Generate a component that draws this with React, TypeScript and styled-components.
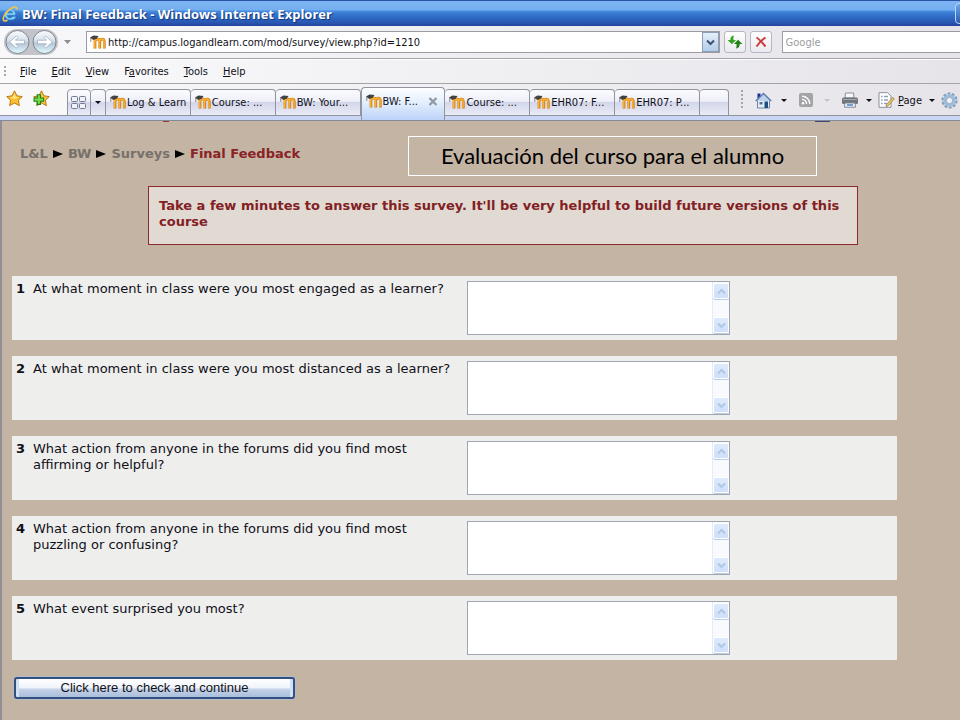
import React from "react";
import styled, { createGlobalStyle } from "styled-components";

const GlobalStyle = createGlobalStyle`
  * { box-sizing: border-box; }
  html, body, #root { height: 100%; }
  body { margin: 0; background: #c3b4a4; overflow: hidden; }
  button, input, textarea { font: inherit; color: inherit; margin: 0; padding: 0; border: 0; border-radius: 0; background: none; }
  svg { display: block; flex: none; }
`;

const ui = `"DejaVu Sans Condensed", "DejaVu Sans", sans-serif`;
const body = `"DejaVu Sans", Verdana, sans-serif`;

const Shell = styled.div`
  display: flex;
  flex-direction: column;
  min-height: 100%;
  font-family: ${ui};
  font-size: 11px;
  color: #101018;
`;

const TitleBar = styled.header`
  display: flex;
  align-items: center;
  gap: 4px;
  height: 26px;
  padding-left: 2px;
  overflow: hidden;
  border-top: 1px solid #2a52a4;
  background: linear-gradient(#7fb6f3 0, #72aef0 36%, #4a8fe2 40%, #3a7bd2 48%, #2f6dc6 64%, #2955b0 88%, #23459a 100%);
`;

const WindowTitle = styled.h1`
  flex: 1;
  margin: 0;
  font: bold 13px/18px "Open Sans", sans-serif;
  color: #fff;
  text-shadow: 1px 1px 1px #16357c;
  white-space: nowrap;
`;

const WindowButton = styled.button`
  flex: none;
  width: 22px;
  height: 21px;
  margin-right: -17px;
  border: 1px solid #b9d5f6;
  border-radius: 4px;
  background: linear-gradient(#6ea6ea, #2a5bb4);
`;

const AddressRow = styled.div`
  display: flex;
  align-items: center;
  height: 33px;
  padding-left: 4px;
  border-bottom: 1px solid #a5a5a9;
  background: linear-gradient(90deg, #f8f7f9, #e6e4e9);
`;

const NavButtons = styled.div`
  display: flex;
  height: 26px;
  border-radius: 13px;
  background: #c2c4c9;
`;

const NavButton = styled.button`
  width: 27px;
  height: 26px;
`;

const HistoryButton = styled.button`
  display: flex;
  align-items: center;
  justify-content: center;
  width: 18px;
  height: 22px;
  color: #8c8c92;
`;

const AddressBox = styled.form`
  display: flex;
  align-items: center;
  flex: 638 1 0;
  height: 22px;
  margin-left: 10px;
  padding-left: 3px;
  gap: 2px;
  border: 1px solid #9b9ca1;
  background: #fff;
`;

const AddressInput = styled.input`
  flex: 1;
  min-width: 0;
  height: 20px;
  outline: 0;
`;

const AddressDrop = styled.button`
  display: flex;
  align-items: center;
  justify-content: center;
  width: 17px;
  height: 20px;
  border: 1px solid #8d9db5;
  background: linear-gradient(#e4effb, #b3cdea);
`;

const SquareButton = styled.button`
  display: flex;
  align-items: center;
  justify-content: center;
  flex: none;
  width: 22px;
  height: 22px;
  margin-left: 4px;
  border: 1px solid #b4b6c4;
  border-radius: 3px;
  background: linear-gradient(#fff, #e9e9f0);
`;

const SearchInput = styled.input`
  flex: 177 1 0;
  min-width: 0;
  height: 22px;
  margin-left: 10px;
  padding-left: 3px;
  border: 1px solid #9b9ca1;
  border-right: 0;
  background: #fff;
  &::placeholder { color: #9c9ca0; opacity: 1; }
`;

const MenuRow = styled.nav`
  display: flex;
  align-items: center;
  height: 25px;
  padding-left: 4px;
  border-top: 1px solid #fdfdfd;
  border-bottom: 1px solid #a3a3a8;
  background: linear-gradient(90deg, #fafafb, #e6e4e9);
`;

const MenuButton = styled.button`
  margin-right: 15px;
  white-space: nowrap;
`;

const Grip = styled.i<{ $rows: number }>`
  flex: none;
  width: 3px;
  height: ${(p) => p.$rows * 4}px;
  background: radial-gradient(circle at 1px 1px, #a6a6ac 1px, transparent 1px) 0 0 / 3px 4px;
`;

const MenuGrip = styled(Grip)`
  margin-right: 13px;
`;

const TabRow = styled.div`
  display: flex;
  align-items: flex-end;
  height: 37px;
  border-bottom: 1px solid #858a98;
  background: linear-gradient(#90949c, #90949c) 0 31px / 100% 1px no-repeat,
    linear-gradient(#c9d6f5, #c9d6f5) 0 32px / 100% 4px no-repeat,
    linear-gradient(90deg, #f9f9fa, #e6e4e9);
`;

const FavButtons = styled.div`
  display: flex;
  align-self: flex-start;
  gap: 10px;
  width: 67px;
  padding: 6px 0 0 6px;
`;

const IconButton = styled.button`
  display: flex;
  align-items: center;
  justify-content: center;
`;

const Tabs = styled.div`
  display: flex;
  align-items: flex-end;
  flex: 661 1 0;
  min-width: 0;
`;

const Tab = styled.button<{ $active?: boolean; $size?: "list" | "drop" | "new" }>`
  display: flex;
  align-items: center;
  gap: 1px;
  flex: ${(p) => (p.$size === "list" ? "0 0 24px" : p.$size === "drop" ? "0 0 15px" : p.$size === "new" ? "0 0 29px" : "1 1 84px")};
  justify-content: ${(p) => (p.$size ? "center" : "flex-start")};
  min-width: 0;
  height: ${(p) => (p.$active ? 33 : 27)}px;
  margin-bottom: ${(p) => (p.$active ? 0 : 4)}px;
  padding: ${(p) => (p.$size ? 0 : p.$active ? "0 6px 5px 4px" : "0 2px 0 4px")};
  border: 1px solid #90949f;
  border-bottom-width: ${(p) => (p.$active ? 0 : 1)}px;
  border-left-width: ${(p) => (p.$size === "list" || p.$active ? 1 : 0)}px;
  border-radius: 4px 4px 0 0;
  background: ${(p) =>
    p.$active
      ? "linear-gradient(#fdfeff, #e3effd 45%, #bcd2f8)"
      : "linear-gradient(#fbfbfe 0, #eeeff8 45%, #d4d7ea 50%, #e9ebf6 100%)"};
`;

const TabText = styled.span`
  flex: 1;
  overflow: hidden;
  text-align: left;
  white-space: nowrap;
`;

const Tools = styled.div`
  display: flex;
  align-items: center;
  flex: none;
  height: 32px;
  margin-bottom: 4px;
  padding: 0 2px 0 12px;
`;

const ToolArrow = styled.button<{ $faint?: boolean }>`
  width: 28px;
  height: 20px;
  display: flex;
  align-items: center;
  justify-content: center;
  color: ${(p) => (p.$faint ? "#c4c4c8" : "#101010")};
`;

const NearArrow = styled(ToolArrow)`
  width: 27px;
  padding-right: 4px;
`;

const ToolGrip = styled(Grip)`
  margin-right: 11px;
`;

const PageButton = styled(IconButton)`
  gap: 3px;
`;

const PageArrow = styled(ToolArrow)`
  width: 19px;
`;

const PageView = styled.main`
  flex: 1;
  padding: 0 63px 0 10px;
  border-left: 2px solid #8f8f94;
  background: #c3b4a4;
  font-family: ${body};
  font-size: 13px;
  line-height: 16px;
`;

const HeaderRemnant = styled.div`
  display: flex;
  justify-content: space-between;
  height: 15px;
  padding: 0 67px 0 151px;
`;

const Mark = styled.i<{ $w: number; $color: string }>`
  width: ${(p) => p.$w}px;
  height: 1px;
  background: ${(p) => p.$color};
`;

const PageHead = styled.div`
  display: flex;
  align-items: flex-start;
  justify-content: space-between;
  gap: 16px;
  padding: 0 80px 0 8px;
`;

const Crumbs = styled.nav`
  display: flex;
  align-items: center;
  gap: 5px;
  padding-top: 10px;
  font-weight: bold;
  color: #8a2226;
  white-space: nowrap;
`;

const CrumbLink = styled.a`
  color: #77716b;
  text-decoration: none;
`;

const Caption = styled.h2`
  width: 409px;
  margin: 0;
  border: 1px solid #fff;
  text-align: center;
  font: 22px/38px Lato, Calibri, sans-serif;
  color: #000;
  white-space: nowrap;
`;

const Notice = styled.p`
  max-width: 710px;
  min-height: 59px;
  margin: 10px auto 31px 136px;
  padding: 11px 10px;
  border: 1px solid #8a2a2c;
  background: #e1dad3;
  color: #822024;
  font-weight: bold;
`;

const Questions = styled.ol`
  display: flex;
  flex-direction: column;
  gap: 16px;
  margin: 0;
  padding: 0;
  list-style: none;
`;

const Question = styled.li`
  display: grid;
  grid-template-columns: 17px 434px minmax(160px, 263px);
  align-items: start;
  padding: 5px 4px;
  background: #eeeeed;
`;

const QuestionLabel = styled.label`
  padding-right: 8px;
`;

const AnswerFrame = styled.div`
  display: flex;
  height: 54px;
  border: 1px solid #a0a5b2;
  background: #fff;
`;

const Answer = styled.textarea`
  flex: 1;
  min-width: 0;
  resize: none;
  overflow: hidden;
  outline: 0;
`;

const ScrollTrack = styled.div`
  display: flex;
  flex-direction: column;
  justify-content: space-between;
  width: 17px;
  padding: 1px 0;
  border-left: 1px solid #e6ebf6;
  background: #f9fafe;
`;

const ScrollButton = styled.button`
  display: flex;
  align-items: center;
  justify-content: center;
  width: 16px;
  height: 16px;
  border: 1px solid #fff;
  border-radius: 2px;
  background: linear-gradient(#dfeafd, #cfdffa);
  box-shadow: 0 1px 0 #bccbe4;
`;

const Submit = styled.button`
  width: 281px;
  height: 22px;
  margin: 17px 2px;
  border: 2px solid #33507e;
  border-radius: 3px;
  background: linear-gradient(#fff 0, #eef3fa 50%, #c6d3e8 55%, #a9bedc 100%);
  box-shadow: inset 4px 0 0 -1px #d3e1f4, inset -4px 0 0 -1px #d3e1f4, 0 0 0 1px #b3bccb;
  font: 13px/16px "Liberation Sans", Arial, sans-serif;
`;

const Arrow = ({ w = 6 }: { w?: number }) => (
  <svg width={w} height={w === 6 ? 3 : 4} viewBox="0 0 10 6" preserveAspectRatio="none">
    <path d="M0 0h10L5 6z" fill="currentColor" />
  </svg>
);

const IELogo = () => (
  <svg width="16" height="18" viewBox="0 0 16 18">
    <path d="M13.600 10.200H5.200c.2 3.200 4 3.500 5.200 1.200h3.800c-1.500 5.400-11.600 4.700-11.600-2 0-6.800 11.600-7.200 11 .8zM5.300 8h5.400C10.400 5.300 5.800 5.200 5.300 8z" fill="#7fd4fa" stroke="#2a75bd" strokeWidth=".5" />
    <path d="M14.500 4.500c1-2.400-1.300-3.300-4.600-1.500C4 6 .2 12.500 1.500 15.200c.6 1.300 2.400.8 4-.2" fill="none" stroke="#f4c64a" strokeWidth="1.600" />
  </svg>
);

const Moodle = () => (
  <svg width="16" height="15" viewBox="0 0 16 15">
    <path d="M5 13.500V4M5 6.500C5.600 3.300 9.800 3.300 9.800 6.500v7M9.800 6.500c.2-3.300 4.500-3.300 4.500 0v7" fill="none" stroke="#c77a1c" strokeWidth="2.700" />
    <path d="M4.700 13V4M4.700 6.500C5.400 3.300 9.500 3.300 9.500 6.500V13M9.500 6.500c.2-3.300 4.500-3.300 4.500 0V13" fill="none" stroke="#fbb030" strokeWidth="1.600" />
    <path d="M0 2.500 3.500.5l5 .6L6.800 3.800 3.300 5z" fill="#44423e" />
    <path d="M.8 2.800v4" stroke="#6a625a" strokeWidth=".8" />
  </svg>
);

const NavArrow = ({ back }: { back?: boolean }) => (
  <svg width="27" height="26" viewBox="0 0 27 26">
    <defs>
      <linearGradient id={back ? "navBack" : "navNext"} x1="0" y1="0" x2="0" y2="1">
        <stop offset="0" stopColor="#fafcfe" />
        <stop offset=".45" stopColor="#d8e0e9" />
        <stop offset=".55" stopColor="#b6c6d6" />
        <stop offset="1" stopColor="#e2fbff" />
      </linearGradient>
    </defs>
    <circle cx="13.500" cy="13" r="11.500" fill={`url(#${back ? "navBack" : "navNext"})`} stroke="#80868f" />
    <path
      d={back ? "M5.500 13l7-6 1.500 1.500-2.500 2.700h9v3.600h-9l2.500 2.700-1.500 1.500z" : "M21.500 13l-7-6-1.500 1.500 2.500 2.700h-9v3.600h9l-2.500 2.700 1.500 1.500z"}
      fill="#fff"
      stroke="#93a8bd"
      strokeWidth=".7"
    />
  </svg>
);

const Refresh = () => (
  <svg width="16" height="14" viewBox="0 0 16 14">
    <path d="M7 .5C4.200 1 3.200 2.600 3.400 5H.6l4.300 4.200L9 5H6.500C6.400 3.300 6.300 2 7 .5z" fill="#37a323" />
    <path d="M9 13.500c2.800-.5 3.800-2.100 3.600-4.500h2.800L11.100 4.800 7 9h2.500c.1 1.700.2 3-.5 4.500z" fill="#207f18" />
  </svg>
);

const Stop = () => (
  <svg width="12" height="12" viewBox="0 0 12 12">
    <path d="M1.500 1.500C4 3 8 7.500 10.500 10.500M10.500 1.500C7.500 3.500 4 7 1.500 10.500" fill="none" stroke="#ca3c3c" strokeWidth="2" />
  </svg>
);

const Chevron = ({ up, dark }: { up?: boolean; dark?: boolean }) => (
  <svg width="9" height="7" viewBox="0 0 9 7">
    <path d={up ? "M1 5.500l3.500-3.500L8 5.500" : "M1 1.500L4.500 5 8 1.500"} fill="none" stroke={dark ? "#3c5372" : "#aec8e4"} strokeWidth="2" />
  </svg>
);

const starPath = "M8 .8l2.300 4.700 5 .7-3.600 3.500.9 5L8 12.300l-4.600 2.400.9-5L.7 6.200l5-.7z";

const Star = () => (
  <svg width="17" height="17" viewBox="0 0 16 16">
    <path d={starPath} fill="#f9bf2f" stroke="#b97212" strokeWidth=".9" />
    <path d="M8 3l1.300 3.300 3.200.5L8 8.500 4 7l2.600-.8z" fill="#ffe47d" />
  </svg>
);

const AddStar = () => (
  <svg width="17" height="17" viewBox="0 0 16 16">
    <path d={starPath} fill="#f9c640" stroke="#b97212" strokeWidth=".9" />
    <path d="M4 4.500h3V7.500h3v3h-3v3h-3v-3h-3v-3h3z" fill="#74df4b" stroke="#1c7f16" />
  </svg>
);

const QuickTabs = () => (
  <svg width="16" height="14" viewBox="0 0 16 14">
    <g fill="#f0f2fa" stroke="#74798f">
      <rect x=".5" y=".5" width="6" height="5" rx="1" />
      <rect x="8.500" y=".5" width="6" height="5" rx="1" />
      <rect x=".5" y="7.500" width="6" height="5" rx="1" />
      <rect x="8.500" y="7.500" width="6" height="5" rx="1" />
    </g>
  </svg>
);

const House = () => (
  <svg width="17" height="17" viewBox="0 0 17 17">
    <path d="M2.500 8.500h12v7.500h-12z" fill="#e5edf7" stroke="#6f86a8" />
    <path d="M2.500 1.500h3v5h-3z" fill="#1831a5" />
    <path d="M.8 9L8.500 1.500 16.200 9" fill="#bcd3ec" stroke="#5c7dac" strokeWidth="1.500" />
    <path d="M4.500 10h3v2.500h-3z" fill="#4c6f9c" />
    <path d="M9.500 9.500h3.500V16H9.500z" fill="#214e80" />
  </svg>
);

const Feed = () => (
  <svg width="14" height="14" viewBox="0 0 14 14">
    <rect width="14" height="14" rx="2" fill="#a4a4a6" />
    <circle cx="4" cy="10.200" r="1.300" fill="#fff" />
    <path d="M3 6.400a4.600 4.600 0 0 1 4.600 4.600M3 3.200A7.800 7.800 0 0 1 10.800 11" fill="none" stroke="#fff" strokeWidth="1.400" />
  </svg>
);

const Printer = () => (
  <svg width="18" height="16" viewBox="0 0 18 16">
    <path d="M4.500 1h8l.5 5H4z" fill="#f7f9fc" stroke="#898e97" />
    <rect x="1" y="5.500" width="16" height="6.500" rx="1.500" fill="#71767d" />
    <path d="M2 7.500h14" stroke="#a3a8af" />
    <path d="M4 11h10l.5 4.200h-11z" fill="#f4f8fe" stroke="#7d8794" />
    <path d="M6 13h6" stroke="#4f7fbd" strokeWidth="1.500" />
  </svg>
);

const PageIcon = () => (
  <svg width="17" height="16" viewBox="0 0 17 16">
    <path d="M1 .7h8.500L13 4v11.300H1z" fill="#fff" stroke="#8b909c" />
    <path d="M3 4.500h1.500M3 8h1.500M3 11.500h1.500M6 4.500h4M6 8h4M6 11.500h3" stroke="#8ba0bd" strokeWidth="1.300" />
    <path d="M8.500 12.500l6-7 1.800 1.300-6 7-2.300.8z" fill="#f0c55b" stroke="#8d7340" strokeWidth=".7" />
  </svg>
);

const Gear = () => (
  <svg width="17" height="17" viewBox="0 0 17 17">
    <circle cx="8.500" cy="8.500" r="7" fill="none" stroke="#7f9fbd" strokeWidth="2.200" strokeDasharray="2.900 1.498" />
    <circle cx="8.500" cy="8.500" r="4.800" fill="none" stroke="#9fbdd8" strokeWidth="3" />
    <circle cx="8.500" cy="8.500" r="3.200" fill="#f0f2f6" stroke="#6f91b3" strokeWidth=".7" />
  </svg>
);

const CloseX = () => (
  <svg width="10" height="9" viewBox="0 0 10 9">
    <path d="M1.500 1l7 7M8.500 1l-7 7" stroke="#8f99a6" strokeWidth="2.300" />
  </svg>
);

const Play = () => (
  <svg width="10" height="8" viewBox="0 0 10 8">
    <path d="M0 0l10 4-10 4z" fill="#000" />
  </svg>
);

const menus: [string, string, string][] = [
  ["", "F", "ile"],
  ["", "E", "dit"],
  ["", "V", "iew"],
  ["F", "a", "vorites"],
  ["", "T", "ools"],
  ["", "H", "elp"],
];

const tabs = ["Log & Learn", "Course: ...", "BW: Your...", "BW: F...", "Course: ...", "EHR07: F...", "EHR07: P..."];
const activeTab = 3;

const crumbs = ["L&L", "BW", "Surveys"];

const questions = [
  "At what moment in class were you most engaged as a learner?",
  "At what moment in class were you most distanced as a learner?",
  "What action from anyone in the forums did you find most affirming or helpful?",
  "What action from anyone in the forums did you find most puzzling or confusing?",
  "What event surprised you most?",
];

export default function App() {
  return (
    <Shell>
      <GlobalStyle />
      <TitleBar>
        <IELogo />
        <WindowTitle>BW: Final Feedback - Windows Internet Explorer</WindowTitle>
        <WindowButton aria-label="Minimize" />
      </TitleBar>

      <AddressRow>
        <NavButtons>
          <NavButton aria-label="Back"><NavArrow back /></NavButton>
          <NavButton aria-label="Forward"><NavArrow /></NavButton>
        </NavButtons>
        <HistoryButton aria-label="Recent pages"><Arrow w={7} /></HistoryButton>
        <AddressBox onSubmit={(e) => e.preventDefault()}>
          <Moodle />
          <AddressInput aria-label="Address" defaultValue="http://campus.logandlearn.com/mod/survey/view.php?id=1210" />
          <AddressDrop type="button" aria-label="Show addresses"><Chevron dark /></AddressDrop>
        </AddressBox>
        <SquareButton aria-label="Refresh"><Refresh /></SquareButton>
        <SquareButton aria-label="Stop"><Stop /></SquareButton>
        <SearchInput aria-label="Search" placeholder="Google" />
      </AddressRow>

      <MenuRow>
        <MenuGrip $rows={3} />
        {menus.map(([pre, key, post]) => (
          <MenuButton key={key}>{pre}<u>{key}</u>{post}</MenuButton>
        ))}
      </MenuRow>

      <TabRow>
        <FavButtons>
          <IconButton aria-label="Favorites center"><Star /></IconButton>
          <IconButton aria-label="Add to favorites"><AddStar /></IconButton>
        </FavButtons>
        <Tabs>
          <Tab $size="list" aria-label="Quick tabs"><QuickTabs /></Tab>
          <Tab $size="drop" aria-label="Tab list"><Arrow /></Tab>
          {tabs.map((name, i) => (
            <Tab key={i} $active={i === activeTab}>
              <Moodle />
              <TabText>{name}</TabText>
              {i === activeTab && <CloseX />}
            </Tab>
          ))}
          <Tab $size="new" aria-label="New tab" />
        </Tabs>
        <Tools>
          <ToolGrip $rows={5} />
          <IconButton aria-label="Home"><House /></IconButton>
          <NearArrow aria-label="Home options"><Arrow /></NearArrow>
          <IconButton aria-label="Feeds"><Feed /></IconButton>
          <ToolArrow $faint aria-label="Feed options"><Arrow /></ToolArrow>
          <IconButton aria-label="Print"><Printer /></IconButton>
          <PageArrow aria-label="Print options"><Arrow /></PageArrow>
          <PageButton><PageIcon /><span><u>P</u>age</span></PageButton>
          <PageArrow aria-label="Page options"><Arrow /></PageArrow>
          <IconButton aria-label="Tools"><Gear /></IconButton>
        </Tools>
      </TabRow>

      <PageView>
        <HeaderRemnant>
          <Mark $w={6} $color="#a03a34" />
          <Mark $w={15} $color="#3d4a78" />
        </HeaderRemnant>
        <PageHead>
          <Crumbs>
            {crumbs.map((c) => (
              <React.Fragment key={c}>
                <CrumbLink href="#">{c}</CrumbLink>
                <Play />
              </React.Fragment>
            ))}
            <span>Final Feedback</span>
          </Crumbs>
          <Caption>Evaluación del curso para el alumno</Caption>
        </PageHead>
        <Notice>
          Take a few minutes to answer this survey. It'll be very helpful to build future versions of this course
        </Notice>
        <form onSubmit={(e) => e.preventDefault()}>
          <Questions>
            {questions.map((q, i) => (
              <Question key={i}>
                <b>{i + 1}</b>
                <QuestionLabel htmlFor={`answer${i}`}>{q}</QuestionLabel>
                <AnswerFrame>
                  <Answer id={`answer${i}`} />
                  <ScrollTrack>
                    <ScrollButton type="button" aria-label="Scroll up"><Chevron up /></ScrollButton>
                    <ScrollButton type="button" aria-label="Scroll down"><Chevron /></ScrollButton>
                  </ScrollTrack>
                </AnswerFrame>
              </Question>
            ))}
          </Questions>
          <Submit>Click here to check and continue</Submit>
        </form>
      </PageView>
    </Shell>
  );
}
